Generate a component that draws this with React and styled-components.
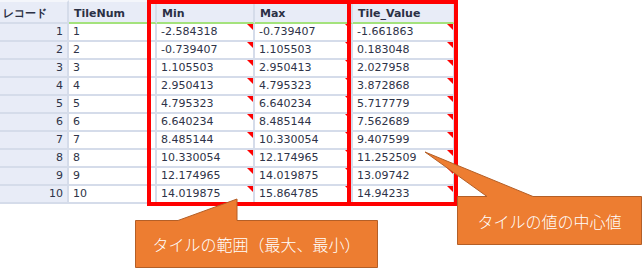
import React from "react";
import styled, { createGlobalStyle, css } from "styled-components";

const GlobalStyle = createGlobalStyle`
  html, body {
    margin: 0;
    padding: 0;
    background: #ffffff;
  }
`;

const rows = [
  [1, "-2.584318", "-0.739407", "-1.661863"],
  [2, "-0.739407", "1.105503", "0.183048"],
  [3, "1.105503", "2.950413", "2.027958"],
  [4, "2.950413", "4.795323", "3.872868"],
  [5, "4.795323", "6.640234", "5.717779"],
  [6, "6.640234", "8.485144", "7.562689"],
  [7, "8.485144", "10.330054", "9.407599"],
  [8, "10.330054", "12.174965", "11.252509"],
  [9, "12.174965", "14.019875", "13.09742"],
  [10, "14.019875", "15.864785", "14.94233"],
];

const SEP = "#d5dcea";
const HEAD_BG = "#e8ecf7";

export default function App() {
  return (
    <Page>
      <GlobalStyle />
      <Table>
        <HeadCell $first>レコード</HeadCell>
        <HeadCell>TileNum</HeadCell>
        <HeadCell>Min</HeadCell>
        <HeadCell>Max</HeadCell>
        <HeadCell>Tile_Value</HeadCell>
        {rows.map(([n, min, max, val]) => (
          <React.Fragment key={n}>
            <RecordCell>{n}</RecordCell>
            <Cell>{n}</Cell>
            <Cell $flagged>{min}</Cell>
            <Cell $flagged>{max}</Cell>
            <Cell $flagged>{val}</Cell>
          </React.Fragment>
        ))}
      </Table>

      {/* red highlight frames drawn over the grid */}
      <Frame $left={147} $width={204} />
      <Frame $left={347} $width={111} />

      <Callout $x={135} $y={220} $w={243} $h={48}>
        <CalloutShape width={243} height={48}>
          <path
            d="M0.5,0.5 H43 L102,-21 V0.5 H242.5 V47.5 H0.5 Z"
            fill="#ed7d31"
            stroke="#b45f27"
          />
        </CalloutShape>
        <CalloutText>タイルの範囲（最大、最小）</CalloutText>
      </Callout>

      <Callout $x={457} $y={196} $w={185} $h={49}>
        <CalloutShape width={185} height={49}>
          <path
            d="M0.5,0.5 H30 L-32,-44 L76,0.5 H184.5 V48.5 H0.5 Z"
            fill="#ed7d31"
            stroke="#b45f27"
          />
        </CalloutShape>
        <CalloutText>タイルの値の中心値</CalloutText>
      </Callout>
    </Page>
  );
}

const Page = styled.div`
  position: relative;
  width: 643px;
  height: 270px;
  overflow: hidden;
  background: #ffffff;
`;

const Table = styled.div`
  display: grid;
  grid-template-columns: 69px 88px 98px 98px 102px;
  width: 455px;
  font-family: "DejaVu Sans", Verdana, sans-serif;
  font-size: 11px;
  color: #2e3348;
`;

const HeadCell = styled.div`
  box-sizing: border-box;
  height: 24px;
  padding: 3px 0 0 ${(p) => (p.$first ? 3 : 5)}px;
  line-height: 17px;
  background: ${HEAD_BG};
  border-top: 2px solid #f4f6fb;
  border-right: 2px solid ${SEP};
  border-bottom: 2px solid ${(p) => (p.$first ? SEP : "#a4e27c")};
  font-weight: bold;
  color: #2b3044;
  white-space: nowrap;
`;

const bodyCell = css`
  box-sizing: border-box;
  position: relative;
  height: 18px;
  line-height: 16px;
  border-right: 2px solid ${SEP};
  border-bottom: 2px solid ${SEP};
  white-space: nowrap;
`;

const RecordCell = styled.div`
  ${bodyCell};
  background: ${HEAD_BG};
  text-align: right;
  padding-right: 4px;
`;

const Cell = styled.div`
  ${bodyCell};
  background: #ffffff;
  padding-left: 4px;

  ${(p) =>
    p.$flagged &&
    css`
      &::after {
        content: "";
        position: absolute;
        top: 0;
        right: 0;
        border-top: 6px solid #ff0000;
        border-left: 6px solid transparent;
      }
    `}
`;

const Frame = styled.div`
  position: absolute;
  top: 0;
  left: ${(p) => p.$left}px;
  width: ${(p) => p.$width}px;
  height: 206px;
  box-sizing: border-box;
  border: 4px solid #ff0000;
`;

const Callout = styled.div`
  position: absolute;
  left: ${(p) => p.$x}px;
  top: ${(p) => p.$y}px;
  width: ${(p) => p.$w}px;
  height: ${(p) => p.$h}px;
  display: flex;
  align-items: center;
  justify-content: center;
`;

const CalloutShape = styled.svg`
  position: absolute;
  left: 0;
  top: 0;
  overflow: visible;
`;

const CalloutText = styled.span`
  position: relative;
  font-family: "Noto Sans CJK JP", "Noto Sans", sans-serif;
  font-size: 16px;
  font-weight: 300;
  color: #ffffff;
  white-space: nowrap;
`;
